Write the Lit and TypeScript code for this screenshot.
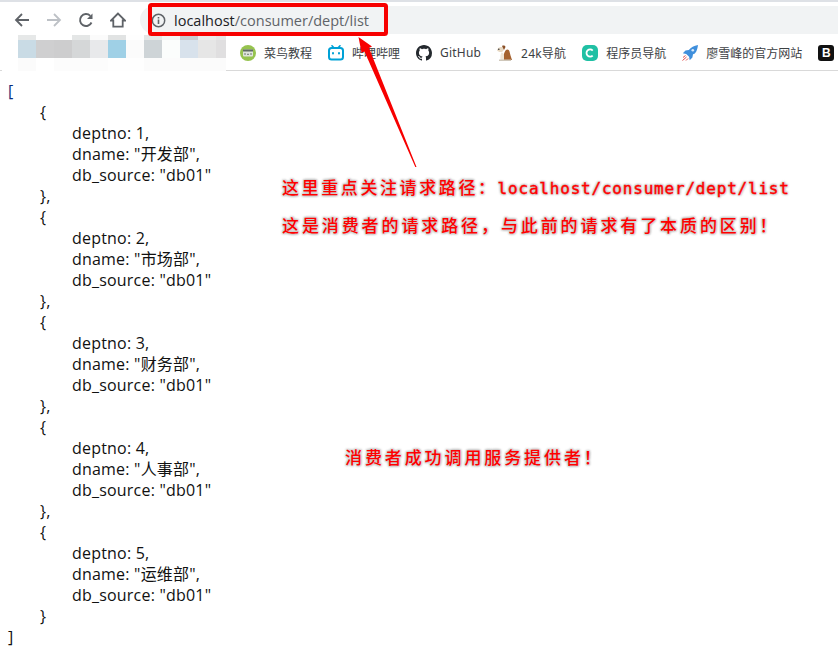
import { LitElement, html, css, svg } from "lit";
import { customElement } from "lit/decorators.js";

const DEPTS = [
  { no: 1, name: "开发部" },
  { no: 2, name: "市场部" },
  { no: 3, name: "财务部" },
  { no: 4, name: "人事部" },
  { no: 5, name: "运维部" },
];

const MOSAIC: [number, string, string, string][] = [
  [16, "#ffffff", "#ffffff", "#ffffff"],
  [18, "#e6e8e8", "#c9dbe5", "#fbfbfb"],
  [18, "#ffffff", "#cfcfd0", "#ffffff"],
  [18, "#ffffff", "#cdcdce", "#fcfcfc"],
  [18, "#e4e6e6", "#d5d7d8", "#fcfcfc"],
  [18, "#fbfbfb", "#e8e9eb", "#fcfcfc"],
  [18, "#e1e3e3", "#9fd0e6", "#fefefe"],
  [18, "#fefefe", "#fbfbfb", "#fefefe"],
  [18, "#e4e6e6", "#ced4d7", "#fbfbfb"],
  [18, "#f4f4f4", "#fbfdfc", "#fbfbfb"],
  [18, "#c9ccd0", "#d8e2ec", "#fbfbfb"],
  [18, "#ececec", "#e6e6e6", "#fbfbfb"],
  [10, "#e6e6e6", "#e0dfe0", "#fbfbfb"],
];

const ICONS = {
  runoob: svg`<svg viewBox="0 0 16 16" width="16" height="16"><circle cx="8" cy="8" r="8" fill="#96c34f"/><rect x="3" y="4.500" width="10" height="7" rx="1" fill="#dfe4dc"/><rect x="3" y="4.500" width="10" height="2" fill="#5f6b63"/><path d="M5.500 8l-1 1 1 1M10.500 8l1 1-1 1M7 9.300h2" stroke="#5f6b63" fill="none" stroke-width=".9"/></svg>`,
  bili: svg`<svg viewBox="0 0 16 16" width="16" height="16"><path d="M4 .8l2.400 2.400M12 .8L9.600 3.200" stroke="#00a1d6" stroke-width="1.600" stroke-linecap="round"/><rect x="1" y="3" width="14" height="11.600" rx="2.600" fill="none" stroke="#00a1d6" stroke-width="2"/><rect x="4" y="7" width="2" height="2.600" rx="1" fill="#00a1d6"/><rect x="10" y="7" width="2" height="2.600" rx="1" fill="#00a1d6"/></svg>`,
  github: svg`<svg viewBox="0 0 16 16" width="16" height="16"><path fill="#24292e" d="M8 0C3.58 0 0 3.58 0 8c0 3.54 2.29 6.53 5.47 7.59.4.07.55-.17.55-.38 0-.19-.01-.82-.01-1.49-2.01.37-2.53-.49-2.69-.94-.09-.23-.48-.94-.82-1.13-.28-.15-.68-.52-.01-.53.63-.01 1.08.58 1.23.82.72 1.21 1.87.87 2.33.66.07-.52.28-.87.51-1.07-1.78-.2-3.64-.89-3.64-3.95 0-.87.31-1.59.82-2.15-.08-.2-.36-1.02.08-2.12 0 0 .67-.21 2.2.82.64-.18 1.32-.27 2-.27.68 0 1.36.09 2 .27 1.53-1.04 2.2-.82 2.2-.82.44 1.1.16 1.92.08 2.12.51.56.82 1.27.82 2.15 0 3.07-1.87 3.75-3.65 3.95.29.25.54.73.54 1.48 0 1.07-.01 1.93-.01 2.2 0 .21.15.46.55.38A8.013 8.013 0 0016 8c0-4.42-3.58-8-8-8z"/></svg>`,
  dog: svg`<svg viewBox="0 0 16 16" width="16" height="16"><path d="M6 15c0-4 1-7 2.500-9.500 1.500-1.800 3.500-1.300 4 1 .6 3 1.500 5.500 2.500 8.500z" fill="#a5622f"/><path d="M0 5c1-2.500 3-3.500 5-3 1.500.5 2 2 1.500 3.500C5.500 7 4 7.300 2.500 6.900 1.300 6.500.3 6 0 5z" fill="#e8d9c3"/><path d="M5 1c1.500-.8 3-.3 3.500 1L7 5z" fill="#8a4f26"/><path d="M4.500 7.500c1.500 0 2.500 1.500 2.500 3.500V15H3.500c-.5-3 0-5.500 1-7.500z" fill="#efe6d8"/><circle cx="1.800" cy="4.300" r=".8" fill="#333"/><path d="M2 14.500h12V16H2z" fill="#cfc7ba"/></svg>`,
  c: svg`<svg viewBox="0 0 16 16" width="16" height="16"><rect width="16" height="16" rx="5" fill="#20c0a4"/><path d="M10.700 5.500A3.600 3.600 0 1 0 10.700 10.500" fill="none" stroke="#fff" stroke-width="1.800"/></svg>`,
  rocket: svg`<svg viewBox="0 0 16 16" width="16" height="16"><path d="M16 0c-4 .6-7 2.300-9.200 5L3.500 5.600.8 8.300l3.400.6 2.900 2.900.6 3.400 2.700-2.700.6-3.300C13.700 9 15.400 5 16 0z" fill="#3f8fdc"/><circle cx="10.800" cy="5.200" r="1.300" fill="#d7e9fa"/><path d="M1 12.500l2.500-2M.5 15.500l4-3.500M4 15.500l2-2" stroke="#e0524f" stroke-width="1"/></svg>`,
  b: svg`<svg viewBox="0 0 16 16" width="16" height="16"><rect width="16" height="16" rx="3" fill="#111"/></svg>`,
};

const BOOKMARKS: { icon: unknown; label: string; wide?: boolean }[] = [
  { icon: ICONS.runoob, label: "菜鸟教程" },
  { icon: ICONS.bili, label: "哔哩哔哩" },
  { icon: ICONS.github, label: "GitHub", wide: true },
  { icon: ICONS.dog, label: "24k导航", wide: true },
  { icon: ICONS.c, label: "程序员导航" },
  { icon: ICONS.rocket, label: "廖雪峰的官方网站" },
];

@customElement("app-root")
export class AppRoot extends LitElement {
  static styles = css`
    :host {
      display: block;
      position: relative;
      width: 838px;
      height: 666px;
      overflow: hidden;
      background: #fff;
      font-family: "Noto Sans", "Noto Sans CJK SC", sans-serif;
    }
    .strip {
      height: 2px;
      background: #dee1e6;
    }
    .toolbar {
      height: 33px;
      display: flex;
      align-items: center;
      padding: 0 0 0 14px;
      box-sizing: border-box;
    }
    .nav {
      display: flex;
      gap: 16px;
      align-items: center;
      width: 126px;
      margin-top: 3px;
    }
    .nav svg {
      display: block;
    }
    .omni {
      flex: 1;
      height: 28px;
      align-self: flex-start;
      margin-top: 4px;
      background: #f1f3f4;
      border-radius: 14px 0 0 14px;
      display: flex;
      align-items: center;
      padding-left: 11px;
      gap: 8px;
    }
    .url {
      font-family: "Open Sans", sans-serif;
      font-size: 14.5px;
      color: #5f6368;
      white-space: nowrap;
    }
    .url b {
      font-weight: 400;
      color: #202124;
    }
    .bookmarks {
      height: 36px;
      box-sizing: border-box;
      border-bottom: 1px solid #d9d9d9;
      display: flex;
      position: relative;
    }
    .mosaic {
      width: 238px;
      margin-left: 2px;
      display: flex;
      flex: none;
      height: 36px;
    }
    .cell {
      display: grid;
      grid-template-rows: 5px 18px 13px;
    }
    .marks {
      display: flex;
      gap: 16px;
      align-items: center;
      height: 35px;
      white-space: nowrap;
    }
    .mark {
      display: flex;
      align-items: center;
      gap: 8px;
      font-size: 12px;
      color: #3c4043;
    }
    .mark.wide {
      letter-spacing: 0.2px;
    }
    .mark svg {
      display: block;
      flex: none;
    }
    .bold-b {
      position: relative;
      width: 16px;
      height: 16px;
    }
    .bold-b span {
      position: absolute;
      inset: 0;
      text-align: center;
      color: #fff;
      font: 700 12px/16px "Liberation Sans", sans-serif;
    }
    .json {
      padding: 10px 0 0 8px;
      font-family: "Open Sans", "Noto Sans CJK SC", sans-serif;
      font-size: 16px;
      letter-spacing: 0.2px;
      line-height: 21px;
      color: #111;
      white-space: nowrap;
    }
    .l1 {
      padding-left: 32px;
    }
    .l2 {
      padding-left: 64px;
    }
    .open {
      color: #0b2a7a;
    }
    .overlay {
      position: absolute;
      left: 0;
      top: 0;
      pointer-events: none;
    }
    .note {
      position: absolute;
      font-family: "Noto Sans CJK SC", sans-serif;
      font-size: 17px;
      line-height: 20px;
      font-weight: 500;
      letter-spacing: 2.9px;
      color: #ff0000;
      white-space: nowrap;
      text-shadow: 1px 1px 2px #c8c8c8, -1px -1px 2px #c8c8c8, 1px -1px 2px #c8c8c8, -1px 1px 2px #c8c8c8;
    }
    .note i {
      font-style: normal;
      font-family: "DejaVu Sans Mono", monospace;
      font-weight: 400;
      -webkit-text-stroke: 0.4px #ff0000;
      font-size: 16px;
      letter-spacing: 0.8px;
    }
    .n1 { left: 282px; top: 177px; letter-spacing: 2.6px; }
    .n2 { left: 282px; top: 215px; }
    .n3 { left: 345px; top: 447px; }
  `;

  private nav() {
    return html`<div class="nav">
      <svg width="16" height="16" viewBox="0 0 16 16"><path d="M15 8H2M8 2L2 8l6 6" fill="none" stroke="#5f6368" stroke-width="1.800"/></svg>
      <svg width="16" height="16" viewBox="0 0 16 16"><path d="M1 8h13M8 2l6 6-6 6" fill="none" stroke="#bdc1c6" stroke-width="1.800"/></svg>
      <svg width="16" height="16" viewBox="0 0 16 16"><path d="M13.500 10.500A6 6 0 1 1 12.300 3.800" fill="none" stroke="#5f6368" stroke-width="1.900"/><path d="M14.500 1.500V7H9z" fill="#5f6368"/></svg>
      <svg width="16" height="16" viewBox="0 0 16 16"><path d="M8 1.500L1 8.500h2.300v6.200h9.400V8.500H15z" fill="none" stroke="#5f6368" stroke-width="1.800"/></svg>
    </div>`;
  }

  render() {
    return html`
      <div class="strip"></div>
      <div class="toolbar">
        ${this.nav()}
        <div class="omni">
          <svg width="15" height="15" viewBox="0 0 15 15"><circle cx="7.500" cy="7.500" r="6.200" fill="none" stroke="#5f6368" stroke-width="1.500"/><path d="M7.500 6.600V11M7.500 4V5.400" stroke="#5f6368" stroke-width="1.600"/></svg>
          <span class="url"><b>localhost</b>/consumer/dept/list</span>
        </div>
      </div>
      <div class="bookmarks">
        <div class="mosaic">
          ${MOSAIC.map(
            ([w, a, b, c]) => html`<div class="cell" style="width:${w}px">
              <div style="background:${a}"></div>
              <div style="background:${b}"></div>
              <div style="background:${c}"></div>
            </div>`
          )}
        </div>
        <div class="marks">
          ${BOOKMARKS.map(
            (m) => html`<div class="mark ${m.wide ? "wide" : ""}">${m.icon}<span>${m.label}</span></div>`
          )}
          <div class="mark"><div class="bold-b">${ICONS.b}<span>B</span></div></div>
        </div>
      </div>
      <div class="json">
        <div class="open">[</div>
        ${DEPTS.map(
          (d, i) => html`
            <div class="l1">{</div>
            <div class="l2">deptno: ${d.no},</div>
            <div class="l2">dname: "${d.name}",</div>
            <div class="l2">db_source: "db01"</div>
            <div class="l1">}${i < DEPTS.length - 1 ? "," : ""}</div>
          `
        )}
        <div>]</div>
      </div>
      <svg class="overlay" width="838" height="666" viewBox="0 0 838 666">
        <rect x="150" y="5" width="236" height="29" rx="1.500" fill="none" stroke="#f70000" stroke-width="4"/>
        <path d="M415.300 167L364.500 51.500l-3 1.300L358.500 37l13.500 9.500-3 1.500L416.500 167z" fill="#f70000"/>
      </svg>
      <div class="note n1">这里重点关注请求路径\uFF1A<i>localhost/consumer/dept/list</i></div>
      <div class="note n2">这是消费者的请求路径\uFF0C与此前的请求有了本质的区别\uFF01</div>
      <div class="note n3">消费者成功调用服务提供者\uFF01</div>
    `;
  }
}
